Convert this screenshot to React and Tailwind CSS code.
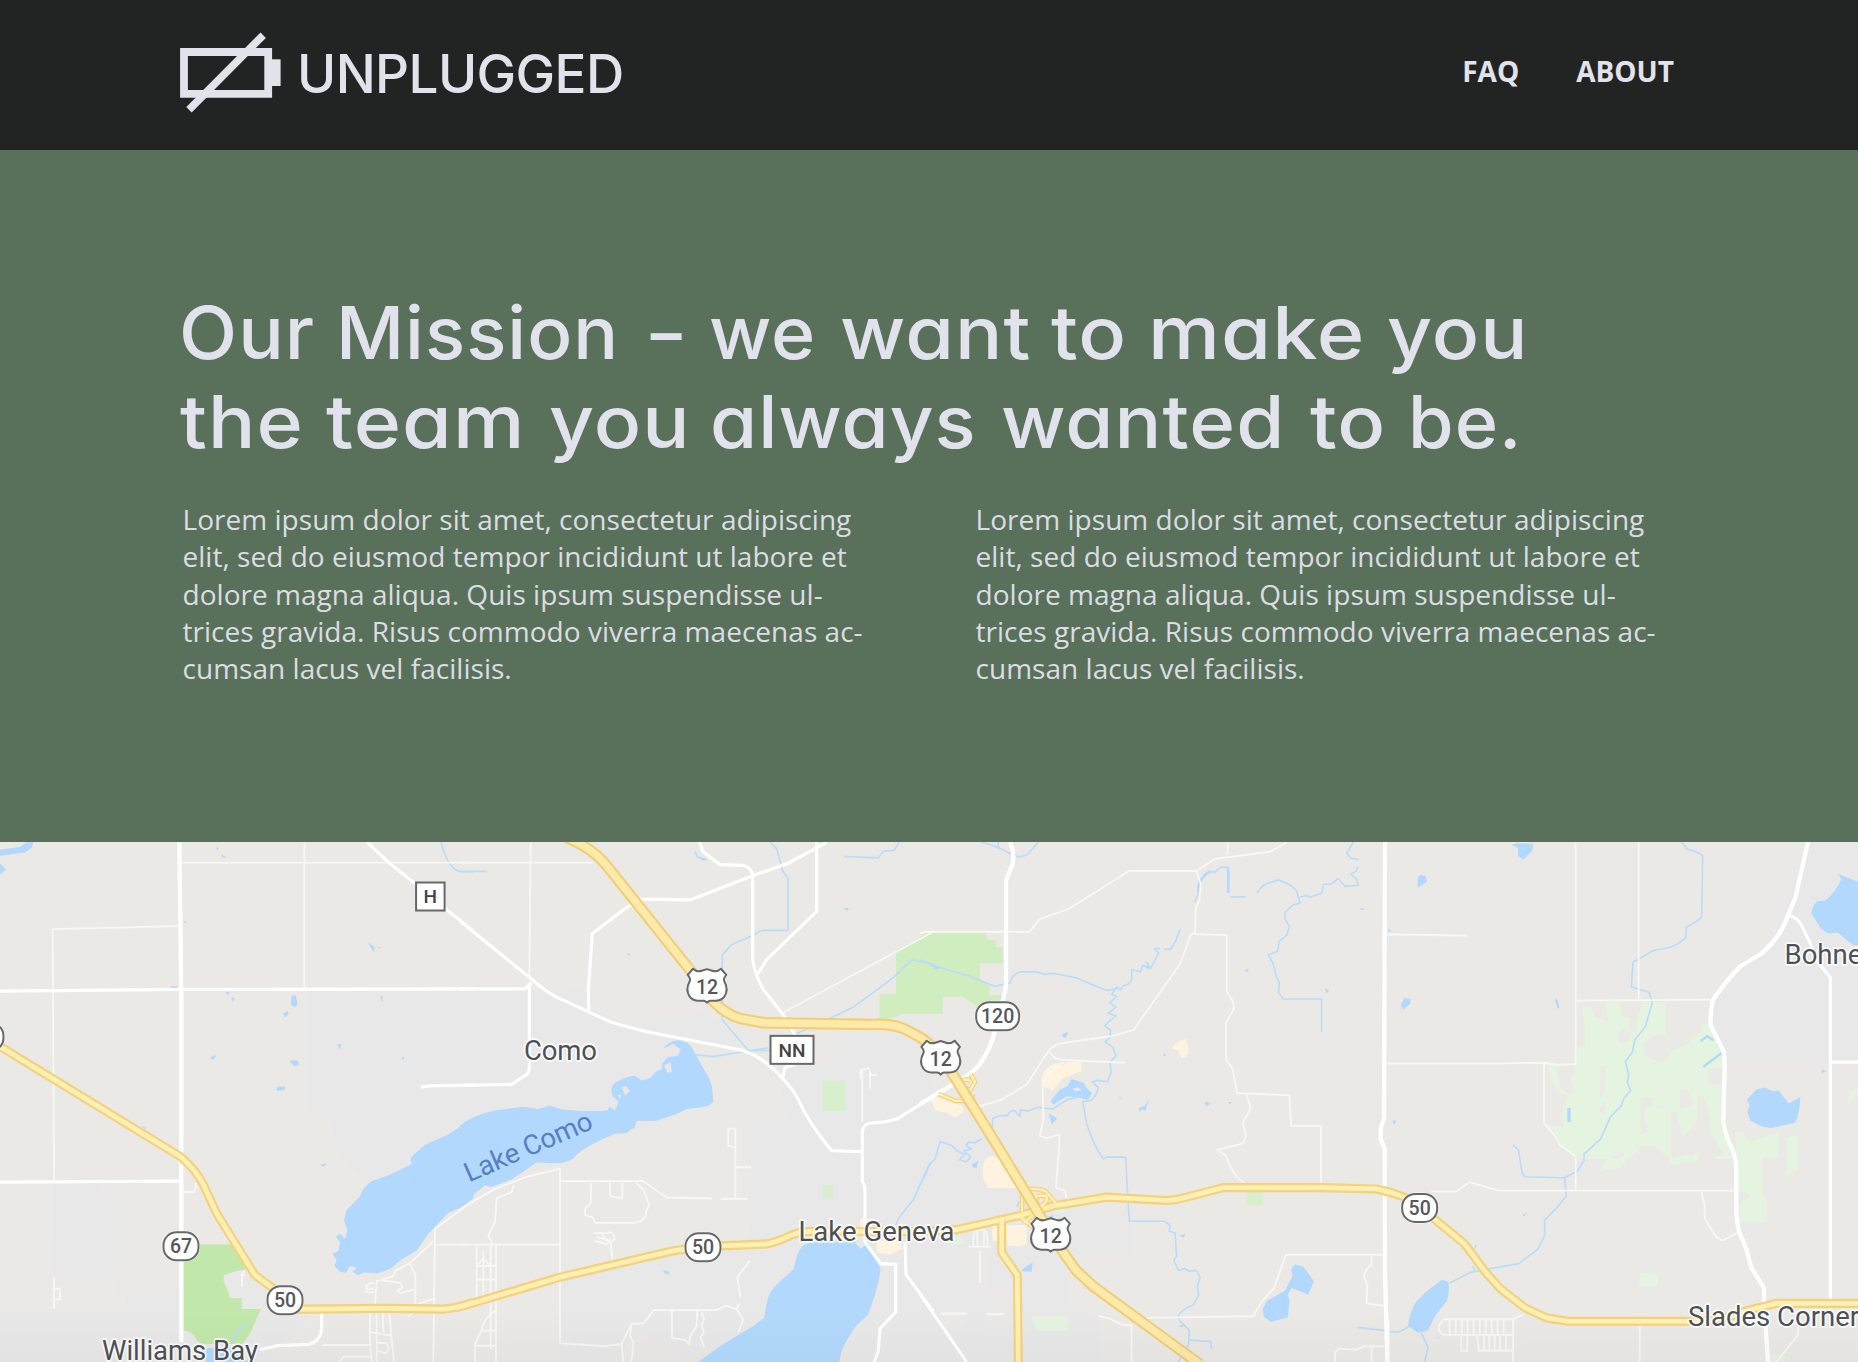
import React from "react";

// The map is digitised in four side-by-side sheets; each entry holds the
// paths of one sheet in that sheet's own units (3 units to a pixel).
const SHEETS = [0, 460, 920, 1388];
const Y_SCALE = 532 / 1568;

function Layer({ sheets, ...props }) {
  return (
    <g {...props}>
      {sheets.map((paths, i) => (
        <g key={i} transform={`translate(${SHEETS[i]} -12) scale(${1 / 3} ${Y_SCALE})`}>
          {paths.map((d, j) => (
            <path key={j} d={d} />
          ))}
        </g>
      ))}
    </g>
  );
}

const urban = [
  [
    "M918,476H1420V880L1240,985L1100,1040L1060,1000L1005,930L1000,860L960,840L918,820Z",
    "M162,1040H300L358,1072V1360H540V1568H0V1410H160Z",
    "M550,1475L600,1500L780,1412H725V1380H690L670,1325L735,1295L820,1360L920,1410V1450L800,1568H550Z",
  ],
  [
    "M0,470L280,468L390,475L400,530L540,585L560,560L740,540L850,645L960,730L990,700L1140,690L1140,600L1420,600V1568H720L700,1568L540,1480L450,1568L300,1568V1320L540,1260L870,1200V820L960,800L930,720L860,660L660,610L760,800L500,900L0,900Z",
  ],
  ["M0,830L130,850L215,860L215,960L300,1060L440,1120H640V1250H440V1400L540,1440V1568H0Z"],
  ["M1262,36H1420V684H1330L1013,690L1005,650L965,575L975,500L1060,400L1120,365L1200,250L1150,240L1200,210Z"],
];

const beige = [
  ["M162,1322H350V1365H380V1412H162Z", "M300,1040H358V1070H310Z"],
  ["M760,800L960,735L980,850H880V1150H860V1200H300V1030L500,900Z"],
  ["M140,1240H200V1345H140Z", "M60,1425H140V1475H60Z", "M195,1355H265V1480H195Z", "M440,1250H640V1120L700,1150V1440H540V1400L460,1300Z"],
  [],
];

const greens = [
  ["M550,1222H700L738,1295Q700,1300 672,1312L670,1328L692,1380H725V1412H783L765,1450Q745,1500 725,1515H600L588,1500Q580,1478 550,1475Z"],
  [],
  [],
  [],
];
const parks = [
  [],
  ["M1308,356L1420,296V542H1325Q1310,552 1258,562V485H1308Z"],
  ["M0,315L20,303H195L205,325H228V345H248V392H180V440L208,456V486H245V520H170L128,492H68V542H0Z"],
  [],
];
const lightParks = [
  [],
  ["M1088,738H1157V829H1088Z", "M1089,1047H1118V1085H1089Z"],
  ["M980,1068H1028V1107H980Z"],
  [],
];
const golf = [
  [],
  [],
  ["M333,1433H443V1475H348Z", "M95,1200H120L135,1218L100,1222Z", "M405,1115H440V1127H405Z"],
  [
    "M582,522L610,522L622,550L660,566L655,506H700V548L724,552L724,584L744,600L746,560L765,506H832L834,590L838,616L820,600Q790,606 768,632L770,665Q800,685 832,682L850,650L900,628Q915,600 942,596L942,568L965,572L1000,640L1003,700L962,706V750L1003,752L1003,880L1045,945V970H976L1010,945Q990,940 962,880L968,850L945,784L928,785V850Q908,888 884,903L870,860L868,830H850V968L936,948L928,975L850,988L840,965L800,932H760L700,996L632,1006L662,970H590L562,962L515,925L474,866L528,875L522,838L540,780L508,775L480,715V688H500L520,765L553,780L555,750L548,735L560,715V650L590,635V575Z",
    "M1043,890L1060,888L1088,918L1172,890V966H1122V1072L1138,1095V1155H1050V1110L1085,1078L1062,1065L1050,1065Z",
    "M1195,908L1230,900V1000L1197,1020Z",
    "M755,1305L809,1310V1345H754Z",
    "M1385,770L1410,762V778L1380,812Z",
    "M1150,1568L1145,1545L1185,1548L1195,1568Z",
  ],
];
const holes = [
  [],
  [],
  [],
  [
    "M693,600L710,584L730,600L722,622L692,628Z",
    "M638,694H652V750L642,790L637,785Z",
    "M630,824L650,803V840Z",
    "M758,792L792,788V815L768,822V850L780,890L758,898Z",
    "M875,765L895,762L910,795V815L875,822Z",
    "M805,808L838,825L815,820Z",
    "M662,968L705,950L710,958L690,968Z",
    "M900,910H916V940L925,952L905,962Z",
  ],
];
const commerce = [
  [],
  ["M1200,1145H1235V1195H1200Z", "M1250,1210H1325V1235L1290,1252L1250,1245Z"],
  [
    "M755,645Q772,618 800,617L807,660L785,675L775,650Z",
    "M362,740Q370,700 410,686L425,695L440,684H484V712L430,730L398,768L370,755Z",
    "M32,795L60,785L130,815V832L105,848L85,835L45,825Z",
    "M188,1005Q190,970 208,962H240L285,1040V1055H205L190,1030Z",
    "M215,1165H320V1222L300,1227L262,1225V1210H218Z",
  ],
  [],
];

const water = [
  [
    "M0,58L60,50L80,36H100L95,52L75,66L0,76Z",
    "M0,98L18,116L0,132Z",
    "M1420,850L1340,900L1275,928L1232,965L1235,985L1170,1015L1115,1035Q1090,1050 1080,1080L1040,1120L1032,1150L1042,1180L1035,1205L1020,1190L1008,1198L1020,1215L1015,1240L998,1250L1010,1268L1003,1284L1020,1302L1038,1305L1050,1285L1070,1290L1058,1302L1075,1312L1090,1304L1130,1307L1170,1294L1205,1265L1250,1240L1285,1190L1345,1128L1385,1112L1420,1085Z",
    "M875,488H888L893,515L883,522L872,515Z",
    "M862,533L866,541L855,553L849,542Z",
    "M868,679L893,680L897,692L882,696Z",
    "M833,757H856L852,768H828Z",
    "M632,668L650,664L640,677L632,675Z",
    "M1012,632L1025,630L1018,647Z",
    "M1104,332L1124,345L1122,362Z",
    "M1132,346L1144,345L1138,350Z",
    "M1140,488L1149,492L1146,508Z",
    "M663,70L680,82L668,82Z",
    "M648,50L655,54L652,62Z",
    "M675,476L690,480L682,486Z",
    "M694,492L705,496L698,506Z",
    "M515,459L533,461L530,467L511,466Z",
    "M962,986L984,983L968,993Z",
    "M1205,670H1213L1209,680Z",
    "M552,268L560,272L553,275Z",
    "M425,872L436,875V885Z",
    "M421,903L432,905L426,912Z",
    "M610,1527H700L745,1568H620Z",
  ],
  [
    "M0,872Q40,838 110,826L190,816L235,822L270,812L300,822Q370,830 422,828L442,827L448,816L465,826L476,802L458,785Q448,760 465,745Q490,728 525,724L545,738L570,732L590,710L605,705L608,685L625,670L655,665L662,648L640,630L610,645Q625,622 655,620Q680,622 695,640L735,710Q755,740 757,765L760,800Q750,815 720,818L680,822L655,835L610,850L585,858H530L525,875L500,893L465,895L430,910L390,930Q360,945 340,968Q310,985 280,982L230,980L200,1000L155,1030L95,1052L75,1048L40,1075L0,1112Z",
    "M1028,1225L1050,1215H1185L1202,1235L1218,1222L1262,1292Q1258,1330 1245,1370L1225,1428L1190,1460Q1160,1500 1143,1540L1138,1568H715L790,1515L880,1462L912,1438L920,1395Q925,1360 960,1330L1000,1296L1012,1250Z",
    "M608,1298L625,1300L628,1310L616,1308Z",
    "M502,364L512,363L505,371Z",
    "M1152,230H1168L1160,238Z",
    "M718,80L742,86L732,92Z",
  ],
  [
    "M392,798L420,765L442,755L455,733L490,745L500,760L516,775L505,795L470,788L440,785L400,810Z",
    "M386,835L412,850L395,868Z",
    "M155,986L175,975L170,997L158,994Z",
    "M430,600L444,595L438,613L426,608Z",
    "M20,390L60,405L50,412Z",
    "M303,1300L315,1288L338,1275L335,1302Z",
    "M1113,1295L1125,1280L1150,1287L1182,1330L1165,1370L1115,1350L1104,1368L1109,1390L1103,1437L1052,1450L1032,1435L1028,1412L1040,1388L1095,1358L1118,1312Z",
    "M853,800L872,805L860,815Z",
    "M655,820L675,812L690,790L680,812L678,828L668,822L660,830Z",
    "M975,415L985,408V420Z",
    "M1215,468L1228,472L1220,482Z",
    "M1316,235L1330,229L1332,236Z",
    "M728,663L736,658L738,668Z",
    "M925,802H935L930,808Z",
    "M595,785L605,790L600,793Z",
    "M778,1196L796,1190L792,1202Z",
    "M776,1460L792,1458L786,1467Z",
    "M384,1140L400,1135L398,1150Z",
  ],
  [
    "M370,44L385,40H436L432,62L405,88L390,75V52Z",
    "M90,138L98,132L112,135L117,152L89,171Z",
    "M38,515L50,495L67,498V512L45,530Z",
    "M500,495L510,503L514,525H508Z",
    "M1350,130L1420,155V340H1395L1350,303L1320,304L1300,292L1285,270L1270,245Q1275,215 1290,210L1312,208Q1345,180 1360,145Z",
    "M1105,765L1130,759L1155,770L1172,768L1202,806L1237,787Q1235,840 1222,862L1150,878L1122,874L1088,858L1078,830L1085,812L1077,795Z",
    "M163,1325L182,1333Q185,1360 177,1388L140,1435L120,1475L90,1482L60,1462Q65,1420 85,1390L115,1360Z",
    "M12,860L25,853L20,868Z",
    "M402,1134L418,1129L408,1139Z",
    "M1303,705L1315,711L1300,717Z",
    "M538,820L548,818V862L538,860Z",
    "M145,1495H153L149,1499Z",
    "M0,290L10,298L2,303Z",
  ],
];

const islands = [
  [],
  ["M612,695L632,684L635,714L622,715Z", "M485,757L500,755L510,770L495,782Z", "M473,782L484,780L480,792Z"],
  ["M458,762L475,758L485,768L465,770Z"],
  [],
];

const streams = [
  ["M1323,36Q1335,80 1350,100Q1365,122 1385,123H1420", "M697,1510L710,1480L742,1453"],
  [
    "M0,122H80",
    "M930,36L950,55L968,120L984,142V296H905L875,312L815,338L787,368V560L865,650H930",
    "M1010,600L1100,560L1180,522L1300,435L1355,383L1420,395",
    "M700,662L760,668L840,655L925,642",
    "M1152,78L1255,82L1270,62L1302,60L1318,36",
    "M705,62L712,80L735,86",
    "M1410,980L1360,1090L1315,1145L1308,1165",
  ],
  [
    "M0,383L60,405L150,432L225,461L270,450Q278,425 300,418L350,418L375,426L400,422L470,436L560,473L590,468",
    "M185,36L215,45L235,52L290,78Q310,80 322,72L355,36",
    "M235,36V55",
    "M780,293L768,325L752,352H733M720,349L703,350L716,362L706,382L692,408L680,390L685,408L667,398L662,418L635,412V445Q620,460 610,458L602,472L590,462L575,485L590,490L570,510L588,522L565,540L588,548L566,565L555,578L572,590L570,610L555,625L578,640L588,665L570,685L573,715L562,742L535,738L517,742L535,760Q530,785 510,798L488,800",
    "M488,800L500,865Q520,930 550,970L560,964H617L622,1060L628,1153H732L750,1165L748,1183L765,1188L770,1255L762,1268L775,1298L795,1292L805,1300L830,1298L840,1320L832,1345L836,1370L820,1400Q790,1410 775,1430L778,1445L808,1475L806,1515L775,1568",
    "M806,1503L872,1508L875,1530",
    "M470,788L440,795L400,822L350,818L325,828L302,825L300,845L285,828Q270,825 262,842L238,842L218,850L217,878M185,910L165,922L145,920L138,930L155,940L132,945L152,965L138,978L118,972L135,955L115,948L95,930L60,918L45,970Q25,985 20,1010L0,1045",
    "M823,212L835,190L838,150Q855,128 870,122L885,124L900,110H925L923,185M932,197H978",
    "M1010,186Q1025,165 1040,158L1075,147Q1115,160 1130,180L1140,215L1118,222L1095,243V262L1108,285L1100,310L1078,328L1072,358L1045,368L1060,395L1068,430L1078,450L1076,480L1090,498H1205V595",
    "M1140,198L1160,193L1170,198L1205,186L1210,160L1232,160L1255,143L1275,166L1315,163L1310,145L1293,130L1308,122L1313,108",
    "M1300,36L1280,68L1292,83L1317,87",
    "M1313,1466L1410,1477",
    "M290,1110L298,1095",
  ],
  [
    "M880,36L900,57Q930,65 944,75L941,255Q930,270 895,286L893,318L870,335L850,345L795,356L735,390L730,463L783,478L793,508L772,580L740,620L733,655L712,682L722,720L718,745L728,768L708,790L700,812L668,845L637,912L588,955V975L568,1005L530,1025L410,1022L402,1010L391,942L374,928",
    "M530,1025L535,1078L510,1110L470,1150V1195L450,1235L430,1250L392,1278L250,1303L185,1335",
    "M100,1482L120,1525L110,1568",
    "M62,1465L30,1480L0,1478",
    "M265,1222L258,1235M253,1285L262,1300",
  ],
];
const pondLines = [
  [],
  [],
  ["M835,185L836,160Q855,128 870,122M925,115V185"],
  ["M946,698L1000,658", "M938,622L958,608L976,620"],
];

const lanes = [
  [
    "M913,36V468",
    "M545,96H1420",
    "M160,292L540,283",
    "M158,292L162,1038",
    "M162,1318V1412M162,1352H180V1384H164",
    "M550,1067H580Q592,1055 585,1040",
    "M735,1298L725,1310L727,1345M722,1312H735",
    "M1410,1100L1305,1175L1300,1568",
    "M1300,1212L1232,1275L1185,1300L1180,1315L1130,1330L1125,1400L1110,1420V1500L1115,1568",
    "M1098,1345V1362H1122M1098,1350Q1100,1335 1122,1335M1098,1352H1122",
    "M1150,1328L1200,1335L1208,1348L1192,1358Q1200,1370 1210,1362L1242,1355",
    "M1230,1278L1246,1312V1400M1225,1435L1260,1395L1300,1382",
    "M1302,1222H1410",
    "M1130,1425V1568M1148,1425L1150,1480M1168,1425L1175,1500L1182,1568M1112,1480L1172,1490M1130,1512H1160Q1172,1535 1155,1542L1135,1535",
    "M965,1518H1110M1020,1568L1030,1552H1110",
  ],
  [
    "M212,36L208,430",
    "M0,96H400",
    "M970,538L1420,300",
    "M0,1118L100,1060L200,1022L300,998V1513L385,1518L430,1522L485,1515L515,1455H550L582,1415H768L800,1402L830,1412L850,1443L835,1480",
    "M160,1048L155,1068L110,1085L105,1155L85,1195L98,1222",
    "M0,1222H300M50,1222V1400M108,1222V1568M50,1285H108M50,1325H108M70,1260L50,1288M70,1260L90,1285M70,1240V1400M92,1222V1530M65,1475H108M108,1415Q70,1440 65,1475L45,1515V1568M45,1520H108",
    "M302,1035H550L620,1083L755,1086M782,1087H862",
    "M394,1040L392,1100L375,1115V1135L398,1142L405,1158H520Q560,1152 558,1125L568,1105L550,1060L528,1040",
    "M450,1040V1078L487,1087V1040",
    "M826,880H805V930L826,935M826,880V1085M828,994H873",
    "M402,1188H440Q465,1180 463,1205Q450,1225 430,1218L405,1210M410,1200L450,1210M450,1205L458,1265M425,1190L445,1215",
    "M870,1270L845,1300L832,1320L842,1378M840,1395L828,1412",
    "M636,1415V1498L675,1503L687,1515L692,1490L710,1462L712,1415M724,1420L732,1440L724,1460L732,1480L722,1495L733,1525",
    "M515,1455L510,1490L520,1510L515,1568M485,1515L490,1568",
    "M1207,860V710M1202,735V708L1228,702M1230,710V762M1230,722H1252",
  ],
  [
    "M0,305L15,300H328L360,262L445,233L628,121H830L885,85L1050,64L1100,36",
    "M923,36V72",
    "M830,121L842,160L838,210L828,225L825,300L812,310L780,395L640,590L572,608L415,630Q400,635 385,652L320,750L245,795L165,818",
    "M385,652L405,672L430,678L616,686",
    "M815,306L920,310V475L941,510V530L918,568V675L938,705L952,775L1108,782L1113,872H1203V1040",
    "M980,780L992,820L968,865L978,900Q975,920 962,926L892,943L918,960Q935,1015 970,1038",
    "M430,685Q370,715 368,765L370,850L360,902L380,908L418,898V930L408,1055L435,1063L440,1085",
    "M180,1335V1240M145,1228H212M160,1225V1195Q165,1178 182,1178Q200,1178 202,1195V1225M172,1225V1185M192,1225V1185",
    "M1392,1252H1098L1062,1350L1025,1390L1000,1433L680,1438M635,1568V1460L605,1458L570,1440L535,1433",
    "M1355,1255V1280Q1330,1300 1332,1320L1342,1340L1340,1395L1392,1402",
    "M1245,1568V1540Q1255,1525 1275,1530L1310,1532L1330,1522H1392M1355,1525V1568",
    "M60,1425H140M200,1427H252",
    "M1400,308H1420M1400,688H1420",
  ],
  [
    "M0,308L238,311",
    "M563,36V690L505,692L470,686L330,688H0",
    "M752,36V500",
    "M566,503L975,500",
    "M468,688V865L500,900L515,928L563,962V1063",
    "M130,1065H205L245,1038L330,1063H1043",
    "M940,1067L950,1105V1145L985,1200L1002,1210L1050,1187",
    "M755,1462V1568",
    "M1230,1465V1488L1165,1568",
    "M375,1568V1442H168L152,1460Q150,1488 175,1488H375M405,1428L375,1442",
    "M185,1442V1488M203,1442V1488M221,1442V1488M239,1442V1488M257,1442V1488M275,1442V1488M293,1442V1488M311,1442V1488M329,1442V1488M347,1442V1488",
    "M220,1490V1535H238V1490M268,1490L272,1535H372M288,1490V1535M304,1490V1535M320,1490V1535M336,1490V1535M354,1490V1535",
    "M2,1440V1568",
  ],
];

const streets = [
  [
    "M0,475L545,470L1420,468",
    "M0,1038L540,1035",
    "M1102,36L1165,95L1245,158L1340,235L1420,298",
    "M1262,758L1290,754L1420,752",
    "M965,1422V1470Q960,1510 925,1516L830,1520L780,1532",
  ],
  [
    "M0,468H195L215,450",
    "M0,268L215,440Q260,480 300,497L450,565Q540,592 600,602L850,650Q920,675 970,735Q1000,765 1015,795Q1050,870 1115,945L1203,948",
    "M208,450V700Q208,715 200,720L155,750L0,753",
    "M387,530L385,470L397,305L500,228L545,204L690,206L878,135L985,98L1100,36",
    "M718,36L730,65L780,102L850,104Q875,112 878,135V380Q882,420 910,470L970,545L1005,605L1005,690L975,700L968,730",
    "M1070,36V240L920,382L893,425",
    "M1420,785L1310,852Q1290,860 1225,865Q1208,870 1207,890V1035L1215,1055V1215L1262,1278L1307,1280V1420L1260,1470L1255,1535L1243,1568",
    "M1335,1215L1338,1310L1420,1420",
  ],
  ["M0,1368L140,1568"],
  [
    "M1200,250Q1230,260 1240,280L1265,330L1290,390L1327,435V1385",
    "M1330,684H1420",
  ],
];
const wideStreets = [
  ["M538,36L544,500V1510"],
  [],
  [
    "M270,36Q285,65 278,100L258,150V460Q250,500 225,590Q215,640 180,690Q150,725 90,755L0,808",
    "M1395,36L1392,850L1382,880V910L1394,940L1395,1300L1402,1568",
  ],
  ["M1260,36L1222,200L1200,250Q1180,315 1118,366L1060,400Q1030,425 975,500Q965,545 968,575L1008,655L1010,690L1006,860Q1012,900 1030,935Q1045,965 1045,1000V1135L1052,1180L1075,1235L1090,1290L1128,1350V1395L1133,1465L1140,1568"],
];

const ramps = [
  [],
  [],
  [
    "M306,1065V1125M328,1058Q360,1056 378,1066L408,1100M345,1072Q350,1110 362,1108Q388,1095 378,1078L350,1078",
    "M300,1140L340,1172M345,1130L312,1158",
    "M55,778L105,798H155L158,778M125,752L150,768L165,742L152,720M122,742Q140,730 152,740",
  ],
  [],
];
const stateRoads = [
  ["M-10,632L545,965Q590,1005 610,1045L650,1130L765,1312L860,1380M860,1412H920L1150,1410L1330,1412Q1370,1410 1420,1392"],
  ["M-10,1408L60,1388L300,1318L640,1240L730,1228L920,1220Q950,1215 1000,1192Q1025,1183 1060,1183L1380,1184"],
  [
    "M0,1184L110,1178L300,1136L400,1108L560,1082L740,1092Q770,1090 800,1082L910,1054H1200L1370,1058L1420,1070",
    "M245,1145V1245L292,1312L295,1568",
  ],
  ["M-12,1064Q40,1075 75,1095L230,1220L290,1300L335,1350L410,1408L475,1438L540,1448H950Q1040,1435 1065,1420L1165,1395H1420"],
];
const federalRoads = [
  [],
  ["M320,22Q400,55 440,105L700,425L760,505Q800,545 840,555L910,568L1240,573Q1310,570 1350,595Q1395,615 1430,652"],
  ["M50,652L60,660L200,880L365,1145L430,1245L470,1300L520,1345L840,1575"],
  [],
];

const font = "Roboto, 'Liberation Sans', sans-serif";

function px(sheet, x, y) {
  return [SHEETS[sheet] + x / 3, y * Y_SCALE - 12];
}

function Pill({ at, label, width = 35 }) {
  const [x, y] = px(...at);
  return (
    <g transform={`translate(${x} ${y})`}>
      <rect x={-width / 2 - 1.5} y={-15.5} width={width + 3} height={31} rx={15} fill="#fff" opacity=".8" />
      <rect x={-width / 2} y={-14} width={width} height={28} rx={13} fill="#fff" stroke="#66686a" strokeWidth="2" />
      {label && (
        <text y="6.8" textAnchor="middle" fontFamily={font} fontSize="19.5" fontWeight="500" fill="#55575a">{label}</text>
      )}
    </g>
  );
}

function Box({ at, label, width }) {
  const [x, y] = px(...at);
  return (
    <g transform={`translate(${x} ${y})`}>
      <rect x={-width / 2} y={-14} width={width} height={28} fill="#fff" stroke="#66686a" strokeWidth="2" />
      <text y="6.8" textAnchor="middle" fontFamily={font} fontSize="19" fontWeight="500" fill="#414346">{label}</text>
    </g>
  );
}

function UsShield({ at }) {
  const [x, y] = px(...at);
  return (
    <g transform={`translate(${x} ${y})`}>
      <path
        transform="scale(.333 .339)"
        d="M-42,-51Q-30,-40 -16,-45L0,-50L16,-45Q30,-40 42,-51L58,-33Q48,-22 52,-14Q66,12 52,31Q44,42 28,43L10,43Q4,44 0,49Q-4,44 -10,43L-28,43Q-44,42 -52,31Q-66,12 -52,-14Q-48,-22 -58,-33Z"
        fill="#fff" stroke="#66686a" strokeWidth="6" strokeLinejoin="round"
      />
      <text y="7.5" textAnchor="middle" fontFamily={font} fontSize="19.5" fontWeight="500" fill="#55575a">12</text>
    </g>
  );
}

function Place({ x, y, length, children }) {
  return (
    <text x={x} y={y} textLength={length} fontFamily={font} fontSize="27.5" fill="#4d5157" stroke="#fff" strokeOpacity=".85" strokeWidth="3.4" strokeLinejoin="round" paintOrder="stroke">
      {children}
    </text>
  );
}

function AreaMap() {
  return (
    <svg className="block h-[520px] w-full" viewBox="0 0 1858 520" preserveAspectRatio="xMidYMin slice" role="img" aria-label="Map of Lake Geneva">
      <defs>
        <linearGradient id="shade" x1="0" y1="0" x2="0" y2="1">
          <stop offset="0" stopColor="#000" stopOpacity="0" />
          <stop offset="1" stopColor="#000" stopOpacity=".025" />
        </linearGradient>
      </defs>
      <rect width="1858" height="520" fill="#ebe9e5" />
      <Layer sheets={urban} fill="#e8e8e8" />
      <Layer sheets={beige} fill="#ebe9e5" />
      <Layer sheets={greens} fill="#c2e7ab" />
      <Layer sheets={parks} fill="#d0edbf" />
      <Layer sheets={lightParks} fill="#d8efcd" />
      <Layer sheets={golf} fill="#e5f3e1" />
      <Layer sheets={holes} fill="#ebe9e5" />
      <Layer sheets={commerce} fill="#fdf3df" />
      <Layer sheets={streams} fill="none" stroke="#b9dcfa" strokeWidth="4.8" strokeLinejoin="round" />
      <Layer sheets={water} fill="#b2d9fd" />
      <Layer sheets={islands} fill="#e8e8e8" />
      <Layer sheets={pondLines} fill="none" stroke="#b2d9fd" strokeWidth="7" />
      <Layer sheets={lanes} fill="none" stroke="#f7f7f5" strokeWidth="5.5" strokeLinejoin="round" />
      <Layer sheets={streets} fill="none" stroke="#fff" strokeWidth="9.5" strokeLinejoin="round" />
      <Layer sheets={wideStreets} fill="none" stroke="#fff" strokeWidth="13" strokeLinejoin="round" />
      <Layer sheets={ramps} fill="none" stroke="#f3d27e" strokeWidth="14" strokeLinejoin="round" />
      <Layer sheets={stateRoads} fill="none" stroke="#f3d27e" strokeWidth="27" strokeLinejoin="round" />
      <Layer sheets={ramps} fill="none" stroke="#fff0b6" strokeWidth="7" strokeLinejoin="round" />
      <Layer sheets={stateRoads} fill="none" stroke="#ffefb2" strokeWidth="14" strokeLinejoin="round" />
      <Layer sheets={federalRoads} fill="none" stroke="#f1cd76" strokeWidth="34" strokeLinejoin="round" />
      <Layer sheets={federalRoads} fill="none" stroke="#fde9a8" strokeWidth="22" strokeLinejoin="round" />

      <Pill at={[0, -42, 610]} />
      <Pill at={[0, 543, 1227]} label="67" />
      <Pill at={[0, 855, 1386]} label="50" />
      <Pill at={[1, 729, 1230]} label="50" />
      <Pill at={[2, 233, 549]} label="120" width={43} />
      <Pill at={[3, 95, 1114]} label="50" />
      <Box at={[0, 1291, 196]} label="H" width={28.5} />
      <Box at={[1, 996, 648]} label="NN" width={43} />
      <UsShield at={[1, 741, 460]} />
      <UsShield at={[2, 62, 672]} />
      <UsShield at={[2, 392, 1194]} />

      <Place x={524} y={218} length={73}>Como</Place>
      <Place x={798.5} y={399} length={156}>Lake Geneva</Place>
      <Place x={102} y={518} length={156}>Williams Bay</Place>
      <Place x={1784.5} y={122}>Bohners Lake</Place>
      <Place x={1688} y={484}>Slades Corners</Place>
      <text transform="translate(469 340.5) rotate(-23.5)" textLength="137" fontFamily={font} fontSize="27.5" fill="#5580c4">Lake Como</text>
      <rect y="470" width="1858" height="50" fill="url(#shade)" />
    </svg>
  );
}

function Logo() {
  return (
    <a className="flex items-start text-[#e2e2ec]">
      <svg className="mt-[30px] h-[86px] w-[104px]" viewBox="178 30 104 86" fill="none" stroke="currentColor">
        <path d="M184 52H268.2V93.8H184Z" strokeWidth="7.8" />
        <path d="M271 59.3H280.6V86H271Z" fill="currentColor" stroke="none" />
        <path d="M189 109.8L263.2 35.2" strokeWidth="7.6" />
      </svg>
      <span className="ml-[15px] mt-[42px] whitespace-nowrap font-['Inter'] text-[53px] font-medium leading-[64px] tracking-[-0.6px]">UNPLUGGED</span>
    </a>
  );
}

// Headline words: text, advance width and horizontal stretch of each.
const HEADLINE = [
  [
    ["Our", "w-[157.5px]", "scale-x-[1.038]"],
    ["Mission", "w-[308px]", "scale-x-[1.022]"],
    ["-", "w-[65px]", "scale-x-[1.31]"],
    ["we", "w-[131px]", "scale-x-[1.03]"],
    ["want", "w-[211px]", "scale-x-[1.08]"],
    ["to", "w-[97px]", "scale-x-[1.084]"],
    ["make", "w-[239px]", "scale-x-[1.109]"],
    ["you", "w-[140px]", "scale-x-[1.075]"],
  ],
  [
    ["the", "w-[146px]", "scale-x-[1.08]"],
    ["team", "w-[223px]", "scale-x-[1.103]"],
    ["you", "w-[161px]", "scale-x-[1.075]"],
    ["always", "w-[290.5px]", "scale-x-[1.045]"],
    ["wanted", "w-[309px]", "scale-x-[1.067]"],
    ["to", "w-[98px]", "scale-x-[1.088]"],
    ["be.", "w-[120px]", "scale-x-[1.011]"],
  ],
];

function Headline() {
  return (
    <h1 className="-ml-[4px] w-max font-['Inter'] text-[73px] font-medium leading-[89px] tracking-[1px] text-[#e2e2ec] [font-feature-settings:'cv11']">
      {HEADLINE.map((line, i) => (
        <span key={i} className={i === 0 ? "flex" : "flex pl-[1.5px]"}>
          {line.map(([text, width, stretch]) => (
            <span key={text} className={`${width} shrink-0`}>
              <span className={`inline-block origin-left whitespace-nowrap ${stretch}`}>{text}</span>{" "}
            </span>
          ))}
        </span>
      ))}
    </h1>
  );
}

const COPY = [
  "Lorem ipsum dolor sit amet, consectetur adipiscing",
  "elit, sed do eiusmod tempor incididunt ut labore et",
  "dolore magna aliqua. Quis ipsum suspendisse ul-",
  "trices gravida. Risus commodo viverra maecenas ac-",
  "cumsan lacus vel facilisis.",
];

function Column() {
  return (
    <p className="whitespace-nowrap text-[28px] leading-[37.33px] tracking-[0.03px] text-[#dcdce3]">
      {COPY.map((line) => (
        <span key={line} className="block">{line}</span>
      ))}
    </p>
  );
}

export default function App() {
  return (
    <div className="h-[1362px] w-full overflow-hidden font-['Open_Sans',sans-serif]">
      <header className="flex h-[150px] items-start justify-between bg-[#222423] pl-[178px] pr-[184px]">
        <Logo />
        <nav className="mt-[52px] flex gap-[57px] text-[28px] font-bold leading-[38px] text-[#e2e2ec]">
          <a>FAQ</a>
          <a>ABOUT</a>
        </nav>
      </header>
      <main>
        <section className="h-[692px] bg-[#59715b] pl-[182.5px] pt-[138px]">
          <Headline />
          <div className="mt-[35px] grid grid-cols-[793px_1fr]">
            <Column />
            <Column />
          </div>
        </section>
        <AreaMap />
      </main>
    </div>
  );
}
